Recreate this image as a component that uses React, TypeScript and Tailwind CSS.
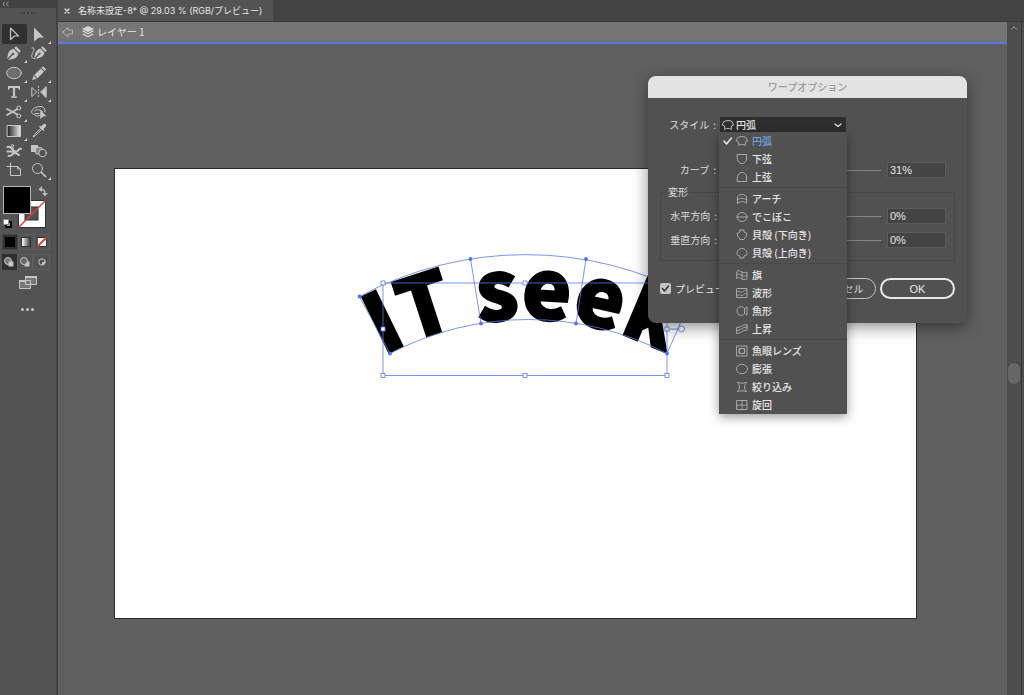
import type { ReactNode } from "react";
import { clsx } from "clsx";

type IconProps = { children: ReactNode; size?: number; className?: string };

function Icon({ children, size = 16, className }: IconProps) {
    return (
        <svg
            width={size}
            height={size}
            viewBox={`0 0 ${size} ${size}`}
            fill="none"
            stroke="currentColor"
            strokeLinecap="round"
            strokeLinejoin="round"
            className={clsx("shrink-0", className)}
            aria-hidden="true"
        >
            {children}
        </svg>
    );
}

const tools: { name: string; more?: boolean; icon: ReactNode }[] = [
    { name: "選択", icon: <path d="M4.500 2 12.500 10H8.500L4.500 13.500Z" strokeWidth="1.200" /> },
    { name: "ダイレクト選択", more: true, icon: <path d="M3 1.500 13 11.500H8L3 15.500Z" fill="currentColor" stroke="none" /> },
    {
        name: "ペン",
        more: true,
        icon: (
            <g fill="currentColor" stroke="none">
                <path d="m10 1.200 4.800 4.800-1.700 1.700-4.800-4.800Z" />
                <path d="M7.600 3.700 12.300 8.400c-.6 3-2.300 4.900-5.400 5.500l-5 1L6.800 10a1.200 1.200 0 1 0-.9-.9L1 14l1-4.800C2.700 6 4.500 4.300 7.600 3.700Z" />
            </g>
        ),
    },
    {
        name: "曲線",
        icon: (
            <>
                <path d="m11.600 1.200 4.200 4.200-1.600 1.600-4.200-4.200ZM9.300 3.600l4.200 4.200c-.6 2.800-2.100 4.300-4.900 4.900l-4.600 1.500 4.500-4.800a1 1 0 1 0-.8-.8l-4.500 4.600.8-4.300C4.900 6.200 6.500 4.400 9.300 3.600Z" fill="currentColor" stroke="none" />
                <path d="M.8 3c2-1 2.700.5 2 2.500S-.5 11 1.500 13c.6.6 1.500.6 2 .5" />
            </>
        ),
    },
    { name: "楕円形", more: true, icon: <ellipse cx="8" cy="8" rx="7.300" ry="5.700" fill="#6d6d6d" /> },
    {
        name: "鉛筆",
        more: true,
        icon: (
            <g fill="currentColor" stroke="none">
                <path d="m12 1.300 3.200 3.200-1.500 1.500-3.300-3.200Z" />
                <path d="m9.700 3.500 3.300 3.300-6.500 6.500-3.300-3.300ZM2.600 10.600l3.200 3.200L1.200 15Z" />
            </g>
        ),
    },
    { name: "文字", more: true, icon: <path d="M2 2h12v3.700h-1.200L12.300 4H9.100v8.200l1.900.4v1.200H5v-1.200l1.900-.4V4H3.700l-.5 1.700H2Z" fill="currentColor" stroke="none" /> },
    {
        name: "リフレクト",
        more: true,
        icon: (
            <>
                <path d="M.8 4v8.500L5.500 8.200Z" />
                <path d="M15.200 3v10.500L9.800 8.200Z" fill="currentColor" />
                <path d="M7.600 2.500v11.500" strokeDasharray="1 2" />
            </>
        ),
    },
    {
        name: "はさみ",
        more: true,
        icon: (
            <>
                <path d="m1 5 10.500 5.500M1 11 11.500 5" strokeWidth="1.700" />
                <circle cx="12.800" cy="4" r="2" />
                <circle cx="12.800" cy="12" r="2" />
            </>
        ),
    },
    {
        name: "シェイプ形成",
        icon: (
            <>
                <path d="M5 3.500c2-1.500 6-1.500 7.500.2 1.800.8 2 3 1 4.300M9 11.500c-3 1-5 .5-5.500-1C.5 10.500-.5 7 2 5.500c.5-1.500 1.800-2 3-2M3.500 7c2-2 6.500-1.500 8 .5M4 9.500h4" />
                <path d="m9.200 6 6.300 6.200h-3L9.200 15Z" fill="currentColor" stroke="none" />
            </>
        ),
    },
    {
        name: "グラデーション",
        more: true,
        icon: (
            <>
                <defs>
                    <linearGradient id="ramp">
                        <stop offset="0" stopColor="#222" />
                        <stop offset="1" stopColor="#eee" />
                    </linearGradient>
                </defs>
                <rect x="1.500" y="2.500" width="13" height="11" fill="url(#ramp)" />
            </>
        ),
    },
    {
        name: "スポイト",
        icon: (
            <>
                <path d="M9.500 5.500 3.500 11.500 2 14l2.500-1.500 6-6" />
                <path d="M8 3.800 12.200 8l1-1-.8-.9 2.300-2.300c1.500-1.500-.9-4-2.400-2.500L10 3.600l-.9-.8Z" fill="currentColor" stroke="none" />
            </>
        ),
    },
    {
        name: "パペットワープ",
        icon: (
            <>
                <path d="M1.500 4c2-1 4 1 5.500 3S11 9 12 7.500s2-2 3-1.500M1.500 8.500c2-.5 4 .5 6 .3M2.500 13c2 .5 3.500-1 5-2.500s4 .5 5.500 1.500" strokeWidth="2" />
                <circle cx="6.500" cy="2.700" r="1.200" />
                <path d="M6.700 4 8 7.500" />
            </>
        ),
    },
    {
        name: "ブレンド",
        icon: (
            <>
                <rect x="0" y="2" width="7" height="7" fill="currentColor" stroke="none" />
                <rect x="4.500" y="4.500" width="6.500" height="6.500" rx="1.500" fill="#888" />
                <circle cx="11.500" cy="10" r="3.700" fill="#535353" />
            </>
        ),
    },
    { name: "アートボード", icon: <path d="M4.500 1v12.500h10V7l-3-2.500H1M11.500 4.500V7h3" /> },
    {
        name: "ズーム",
        more: true,
        icon: (
            <>
                <circle cx="6.500" cy="6.500" r="5" />
                <path d="m10.500 10.500 4 4" strokeWidth="1.700" />
            </>
        ),
    },
];

const arcIcon = <path d="M3 3.500c2-1.300 6-1.300 8 0L12.500 7 10.300 8v3.500C8.500 10 5.500 10 3.700 11.500V8L1.500 7Z" />;

const warpGroups: { label: string; icon: ReactNode }[][] = [
    [
        { label: "円弧", icon: arcIcon },
        { label: "下弦", icon: <path d="M2.500 2.500h9V8c-1 2-2.500 3.500-4.500 3.500S3.500 10 2.500 8Z" /> },
        { label: "上弦", icon: <path d="M2.500 11.500h9V6C11 4 9 2.500 7 2.500S3 4 2.500 6Z" /> },
    ],
    [
        { label: "アーチ", icon: <path d="M2.500 11.500V5C4 1.500 10 1.500 11.500 5v6.500C10 9 4 9 2.500 11.500M2.500 8.300C4 5.500 10 5.500 11.500 8.300" /> },
        { label: "でこぼこ", icon: <><ellipse cx="7" cy="7" rx="5" ry="4.500" /><path d="M2 7h10" /></> },
        { label: "貝殻 (下向き)", icon: <path d="M5 2h4c-.7 1.800 0 2.500 2.800 3.200C12.500 8 9.500 9.500 9 11.500H5C4.500 9.500 1.500 8 2.200 5.200 5 4.500 5.700 3.800 5 2Z" /> },
        { label: "貝殻 (上向き)", icon: <path d="M5 12h4c-.7-1.800 0-2.500 2.800-3.200C13 5 9.500 2.500 7 2.500S1 5 2.200 8.800C5 9.500 5.700 10.200 5 12Z" /> },
    ],
    [
        { label: "旗", icon: <path d="M2 3.500c2-2 4 0 5 .5s3 1 5 0V11c-2 1-4 .5-5 0s-3-2.500-5-.5ZM2 7c2-2 4 0 5 .5s3 1 5 0M7 4v7" /> },
        { label: "波形", icon: <path d="M2 2.500h10v9H2ZM2 6c2-2 3 .5 5 0s3-3 5-1.500M2 9.500c2-2 3 .5 5 0s3-3 5-1.500" /> },
        { label: "魚形", icon: <path d="M9.500 4.500C7.500 1 2 2.500 2 7s5.500 6 7.500 2.500L12 11V3ZM9.500 4.500v5" /> },
        { label: "上昇", icon: <path d="M2 5.500c4 0 5-3 10-3V8c-5 0-6 3.500-10 3.500ZM2 8.500c4 0 5-3.500 10-3.500" /> },
    ],
    [
        { label: "魚眼レンズ", icon: <><path d="M2 2h10v10H2ZM4.500 4.500h5v5h-5Z" /><circle cx="7" cy="7" r="2.800" /></> },
        { label: "膨張", icon: <ellipse cx="7" cy="7" rx="5.500" ry="4.800" /> },
        { label: "絞り込み", icon: <path d="M2.500 2.500c3 .8 6 .8 9 0-2.600 3-2.600 6 0 9-3-.8-6-.8-9 0 2.600-3 2.600-6 0-9Z" /> },
        { label: "旋回", icon: <path d="M2 2.500h10v9H2ZM2 7.500c2 0 3-1 5-.5s3 .3 5-.5M7.500 2.500C7.500 4 6.500 5 7 7s0 3 0 4.500" /> },
    ],
];

function Toolbar() {
    return (
        <aside className="flex w-14 shrink-0 flex-col bg-[#535353] text-[#c6c6c6]">
            <div className="flex h-2 items-center bg-[#424242] pl-0.5">
                <Icon size={8} className="text-[#999]">
                    <path d="M2.500 2 1 4l1.500 2M6 2 4.500 4 6 6" />
                </Icon>
            </div>
            <div className="flex h-4 justify-center pt-1">
                <div className="h-0.5 w-4 border-t-2 border-dotted border-[#404040]" />
            </div>
            <div className="ml-0.5 grid h-[156px] w-[49px] grid-cols-2 grid-rows-8">
                {tools.map((tool, i) => (
                    <button
                        key={tool.name}
                        title={tool.name}
                        className={clsx("relative flex items-center justify-center rounded-xs", i === 0 && "bg-[#303030]")}
                    >
                        <Icon>{tool.icon}</Icon>
                        {tool.more && (
                            <svg width="3" height="3" className="absolute right-0 bottom-0" aria-hidden="true">
                                <path d="M3 0v3H0Z" fill="#d0d0d0" />
                            </svg>
                        )}
                    </button>
                ))}
            </div>
            <svg width="50" height="48" className="mt-1" fill="none" role="img" aria-label="塗りと線">
                <rect x="18.500" y="16.500" width="27" height="27" fill="#fff" stroke="#333" />
                <rect x="25" y="23" width="13" height="13" fill="#535353" stroke="#333" />
                <path d="M18.500 43.500 45.500 16.500" stroke="#e0402f" strokeWidth="1.500" />
                <rect x="3.500" y="2.500" width="27" height="27" fill="#000" stroke="#b5b5b5" />
                <path d="M41 5.500c3-.5 4 1 3.800 4" stroke="#bbb" strokeWidth="1.500" />
                <path d="M42 2v6l-3.500-2.800ZM42 9h6l-3 3.500Z" fill="#bbb" />
                <rect x="6" y="38" width="5" height="5" fill="#aaa" stroke="#000" strokeWidth="2" />
                <rect x="3.500" y="35.500" width="5" height="5" fill="#fff" stroke="#888" />
            </svg>
            <div className="mt-0.5 ml-0.5 flex h-4 w-12">
                <button title="カラー" className="flex flex-1 items-center justify-center border border-[#454545] bg-[#303030]">
                    <span className="size-2.5 bg-black" />
                </button>
                <button title="グラデーション塗り" className="flex flex-1 items-center justify-center border border-[#5e5e5e]">
                    <span className="size-2.5 border border-[#333] bg-linear-to-r from-white to-[#444]" />
                </button>
                <button title="なし" className="flex flex-1 items-center justify-center border border-[#5e5e5e]">
                    <Icon size={12}>
                        <rect x="1.500" y="1.500" width="9" height="9" fill="#fff" stroke="#333" />
                        <path d="m2 10 8-8" stroke="#e0402f" strokeWidth="2" />
                    </Icon>
                </button>
            </div>
            <div className="mt-1 ml-0.5 flex h-4 w-12">
                <button title="標準描画" className="flex flex-1 items-center justify-center bg-[#303030]">
                    <Icon size={12}>
                        <circle cx="5" cy="5" r="3.500" fill="#777" />
                        <rect x="5.500" y="5.500" width="5" height="5" fill="currentColor" stroke="none" />
                    </Icon>
                </button>
                <button title="背面描画" className="flex flex-1 items-center justify-center border border-[#5e5e5e]">
                    <Icon size={12}>
                        <rect x="5.500" y="5.500" width="5" height="5" fill="currentColor" stroke="none" />
                        <circle cx="5" cy="5" r="3.500" fill="#666" />
                    </Icon>
                </button>
                <button title="内側描画" className="flex flex-1 items-center justify-center border border-[#5e5e5e]">
                    <Icon size={12}>
                        <circle cx="6" cy="6" r="3.200" />
                        <path d="M6 6h3a3 3 0 0 1-3 3Z" fill="currentColor" stroke="none" />
                    </Icon>
                </button>
            </div>
            <button title="スクリーンモード" className="mt-1 flex justify-center">
                <svg width="20" height="18" fill="#777" stroke="#c6c6c6" aria-hidden="true">
                    <path d="M1.500 6.500h11v8h-11ZM7.500 2.500h11v8h-11Z" />
                    <path d="M1 7h6M7 3h12" strokeWidth="2" />
                </svg>
            </button>
            <button title="ツールバーを編集" className="mt-4 flex justify-center gap-0.5 pr-0.5">
                <span className="size-[3px] rounded-full bg-[#c6c6c6]" />
                <span className="size-[3px] rounded-full bg-[#c6c6c6]" />
                <span className="size-[3px] rounded-full bg-[#c6c6c6]" />
            </button>
        </aside>
    );
}

const nodes = [
    [359.5, 296.5], [470.5, 259], [586, 259], [390, 353.5], [481, 323.5], [576, 323.5], [667, 353.5],
];
const handles = [
    [383, 283], [525, 283], [383, 329], [383, 375.5], [525, 375.5], [667, 375.5], [667, 329],
];

function WarpedText() {
    return (
        <svg
            width="400"
            height="170"
            viewBox="340 230 400 170"
            fill="none"
            stroke="#5a7bea"
            strokeWidth=".8"
            className="absolute top-[61px] left-[225px] overflow-visible"
        >
            <path id="baseline" d="M383 356A299 299 0 0 1 699 374" stroke="none" />
            <text
                fontSize="83"
                fontWeight="900"
                fill="#000"
                stroke="#000"
                strokeWidth="2"
                className="font-['Noto_Sans_CJK_JP',sans-serif]"
            >
                <textPath href="#baseline">IT seek</textPath>
            </text>
            <path d="M359.500 296.500A351 351 0 0 1 692 296.500L667 353.500A299 299 0 0 0 390 353.500ZM470.500 259 481 323.500M586 259 576 323.500" />
            <path d="M383 283h284v92.500H383ZM667 329h11" />
            {nodes.map(([x, y]) => (
                <circle key={`${x}-${y}`} cx={x} cy={y} r="1.900" fill="#4f74f5" stroke="none" />
            ))}
            {handles.map(([x, y]) => (
                <rect key={`${x}-${y}`} x={x - 2} y={y - 2} width="4" height="4" fill="#fff" />
            ))}
            <circle cx="681.500" cy="329" r="3" fill="#fff" />
        </svg>
    );
}

function FieldLabel({ htmlFor, children }: { htmlFor: string; children: ReactNode }) {
    return (
        <label htmlFor={htmlFor} className="flex w-14 shrink-0 justify-end gap-1 whitespace-nowrap">
            {children}
            <span>:</span>
        </label>
    );
}

function PercentRow({ id, label, value }: { id: string; label: string; value: number }) {
    return (
        <div className="flex h-4 items-center">
            <FieldLabel htmlFor={id}>{label}</FieldLabel>
            <input
                type="range"
                aria-label={label}
                min={-100}
                max={100}
                defaultValue={value}
                className="ml-1 h-4 min-w-0 flex-1 appearance-none bg-transparent [&::-webkit-slider-runnable-track]:h-px [&::-webkit-slider-runnable-track]:bg-[#858585] [&::-webkit-slider-thumb]:-mt-1 [&::-webkit-slider-thumb]:size-2 [&::-webkit-slider-thumb]:appearance-none [&::-webkit-slider-thumb]:rounded-full [&::-webkit-slider-thumb]:bg-[#c6c6c6]"
            />
            <input
                id={id}
                defaultValue={`${value}%`}
                className="mr-2 ml-1.5 h-4 w-[59px] border border-[#5a5a5a] bg-[#444] px-0.5 font-['Liberation_Sans',sans-serif] text-[11px] text-[#e8e8e8]"
            />
        </div>
    );
}

function StyleMenu() {
    return (
        <ul
            role="listbox"
            aria-label="スタイル"
            className="absolute top-[15px] -left-px z-10 w-32 bg-[#515151] font-medium text-[#e6e6e6] shadow-[0_3px_10px_rgba(0,0,0,0.4)]"
        >
            {warpGroups.map((group, g) => (
                <li key={g} role="group" className={clsx(g > 0 && "mt-px border-t border-[#484848] pt-0.5")}>
                    {group.map((item) => {
                        const selected = item.label === "円弧";
                        return (
                            <button
                                key={item.label}
                                role="option"
                                aria-selected={selected}
                                className="flex h-[18px] w-full items-center pl-1 leading-3"
                            >
                                <Icon size={10} className={clsx("mr-0.5", !selected && "invisible")}>
                                    <path d="m1 5 2.500 3L8.500 2" strokeWidth="1.500" />
                                </Icon>
                                <Icon size={14} className="mr-[3px] text-[#a8a8a8]">
                                    {item.icon}
                                </Icon>
                                <span className={clsx(selected && "text-[#6fa3e6]")}>{item.label}</span>
                            </button>
                        );
                    })}
                </li>
            ))}
        </ul>
    );
}

function WarpDialog() {
    return (
        <section
            role="dialog"
            aria-labelledby="warp-title"
            className="absolute top-[76px] left-[648px] w-[319px] rounded-lg bg-[#515151] text-[10px] leading-3 text-[#dcdcdc] shadow-[0_4px_16px_rgba(0,0,0,0.45)]"
        >
            <h2 id="warp-title" className="flex h-[22px] items-center justify-center rounded-t-lg bg-[#e3e3e3] font-medium text-[#9c9c9c]">
                ワープオプション
            </h2>
            <form className="px-3 pt-[19px] pb-6">
                <div className="flex h-4 items-center">
                    <FieldLabel htmlFor="style">スタイル</FieldLabel>
                    <div className="relative ml-1 text-[#e6e6e6]">
                        <select id="style" className="block h-4 w-[126px] appearance-none bg-[#2e2e2e] pl-4 font-medium">
                            {warpGroups.flat().map((item) => (
                                <option key={item.label}>{item.label}</option>
                            ))}
                        </select>
                        <Icon size={14} className="pointer-events-none absolute top-px left-px text-[#c0c0c0]">
                            {arcIcon}
                        </Icon>
                        <Icon size={8} className="pointer-events-none absolute top-1 right-1">
                            <path d="m1 3 3 2.500L7 3" strokeWidth="1.200" />
                        </Icon>
                        <StyleMenu />
                    </div>
                </div>
                <div className="mt-[29px] pr-px">
                    <PercentRow id="bend" label="カーブ" value={31} />
                </div>
                <fieldset className="mt-2 flex flex-col gap-2 border border-[#484848] pt-2.5 pb-3">
                    <legend className="ml-[5px] px-0.5">変形</legend>
                    <PercentRow id="horizontal" label="水平方向" value={0} />
                    <PercentRow id="vertical" label="垂直方向" value={0} />
                </fieldset>
                <div className="mt-[17px] flex h-[21px] items-center gap-1">
                    <label className="mr-auto flex items-center gap-1 text-[#e6e6e6]">
                        <span className="relative flex">
                            <input type="checkbox" defaultChecked className="size-[11px] appearance-none rounded-xs bg-[#c4c4c4]" />
                            <Icon size={11} className="pointer-events-none absolute inset-0 text-[#333]">
                                <path d="m2.500 5.500 2 2.500 4-5" strokeWidth="1.500" />
                            </Icon>
                        </span>
                        プレビュー
                    </label>
                    <button type="button" className="h-full w-[75px] rounded-full border border-[#c4c4c4]">
                        キャンセル
                    </button>
                    <button type="button" className="h-full w-[75px] rounded-full border-2 border-[#e8e8e8] font-['Liberation_Sans',sans-serif] text-[11px] text-[#e8e8e8]">
                        OK
                    </button>
                </div>
            </form>
        </section>
    );
}

export default function App() {
    return (
        <div className="relative flex h-screen overflow-hidden bg-[#434343] font-['Noto_Sans_CJK_JP',sans-serif]">
            <Toolbar />
            <main className="ml-0.5 flex min-w-0 flex-1 flex-col">
                <div className="flex h-[22px] shrink-0 border-b border-[#3a3a3a]">
                    <div className="flex w-[215px] items-center bg-[#535353] pl-1.5 text-[9px] leading-3 whitespace-nowrap text-[#e6e6e6]">
                        <button title="閉じる" className="mr-2">
                            <Icon size={6}>
                                <path d="m1 1 4 4M5 1 1 5" strokeWidth="1.200" />
                            </Icon>
                        </button>
                        <span className="font-['Inter','Noto_Sans_CJK_JP',sans-serif]">
                            名称未設定-8* @ 29.03 % (RGB/プレビュー)
                        </span>
                    </div>
                </div>
                <div className="flex min-h-0 flex-1">
                    <div className="flex min-w-0 flex-1 flex-col bg-[#606060]">
                        <nav className="flex h-[22px] shrink-0 items-center border-b-2 border-[#5b76dd] bg-[#757575] pl-1 text-[10px] leading-3 text-[#e4e4e4]">
                            <button title="戻る" className="mr-2">
                                <Icon size={12} className="text-[#b5b5b5]">
                                    <path d="M1 6 6 1.500V4h4.500v4H6v2.500Z" />
                                </Icon>
                            </button>
                            <Icon size={12} className="mr-[3px]">
                                <g fill="#d5d5d5" stroke="none">
                                    <path d="m6 0 6 3-6 3.200L0 3Z" />
                                    <path d="m0 5.300 1.500-.7L6 7l4.500-2.400 1.500.7-6 3.200Z" />
                                    <path d="m0 8.300 1.500-.7L6 10l4.500-2.400 1.500.7-6 3.200Z" />
                                </g>
                            </Icon>
                            レイヤー 1
                        </nav>
                        <div className="relative mt-[124px] mr-[90px] ml-14 h-[451px] border border-[#2a2a2a] bg-white">
                            <WarpedText />
                        </div>
                    </div>
                    <div className="flex w-3.5 shrink-0 flex-col items-center bg-[#4d4d4d] pt-0.5">
                        <Icon size={8} className="text-[#999]">
                            <path d="m1.500 5 2.500-2 2.500 2" />
                        </Icon>
                        <div className="mt-[331px] h-[21px] w-3 rounded-full bg-[#666]" />
                    </div>
                    <div className="w-[3px] shrink-0 border-l border-[#383838] bg-[#4d4d4d]" />
                </div>
            </main>
            <WarpDialog />
        </div>
    );
}
